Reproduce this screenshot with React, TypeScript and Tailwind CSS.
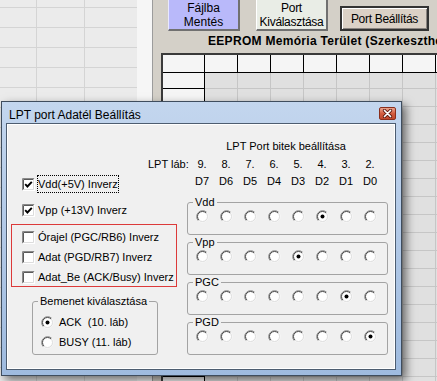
import React from 'react';

const COLS = ['9.', '8.', '7.', '6.', '5.', '4.', '3.', '2.'];
const BITS = ['D7', 'D6', 'D5', 'D4', 'D3', 'D2', 'D1', 'D0'];
const GROUPS = [
  { name: 'Vdd', checked: 5 },
  { name: 'Vpp', checked: 4 },
  { name: 'PGC', checked: 6 },
  { name: 'PGD', checked: 7 },
];
const LEFT_ROWS = Array.from({ length: 19 });
const TABLE_ROWS = Array.from({ length: 19 });
const TABLE_COLS = Array.from({ length: 8 });

function Radio({ checked }: { checked?: boolean }) {
  return (
    <svg width="13" height="13" viewBox="0 0 13 13" className="shrink-0">
      <circle cx="6.5" cy="6.5" r="5" fill="#fff" />
      <path d="M2.26 10.74A6 6 0 0 1 10.74 2.26" fill="none" stroke="#8c8c8c" />
      <path d="M10.74 2.26A6 6 0 0 1 2.26 10.74" fill="none" stroke="#f6f6f6" />
      <path d="M2.96 10.04A5 5 0 0 1 10.04 2.96" fill="none" stroke="#4a4a4a" />
      <path d="M10.04 2.96A5 5 0 0 1 2.96 10.04" fill="none" stroke="#dedede" />
      {checked && <circle cx="6.5" cy="6.5" r="2" fill="#000" />}
    </svg>
  );
}

function Check({ checked }: { checked?: boolean }) {
  return (
    <svg width="13" height="13" viewBox="0 0 13 13" className="shrink-0">
      <rect x="0" y="0" width="13" height="13" fill="#fff" />
      <path d="M0.5 12.5V0.5H12.5" stroke="#8a8a8a" fill="none" />
      <path d="M1.5 11.5V1.5H11.5" stroke="#5a5a5a" fill="none" />
      <path d="M0.5 12.5H12.5V0.5" stroke="#fff" fill="none" />
      <path d="M1.5 11.5H11.5V1.5" stroke="#dcdcdc" fill="none" />
      {checked && <path d="M3.2 6.2l2.2 2.3L9.8 3.8" stroke="#000" strokeWidth="1.9" fill="none" />}
    </svg>
  );
}

function CheckRow({ label, checked, focused }: { label: string; checked?: boolean; focused?: boolean }) {
  return (
    <div className={`flex items-center h-[20px] ${focused ? 'gap-[2px]' : 'gap-[3px]'}`}>
      <Check checked={checked} />
      <span
        className={`whitespace-nowrap leading-[16px] ${focused ? 'border border-dotted border-black' : ''}`}
      >
        {label}
      </span>
    </div>
  );
}

function BitGroup({ name, checked }: { name: string; checked: number }) {
  return (
    <fieldset className="h-[39px] border border-[#a3a3a3] rounded-[3px]">
      <legend className="ml-[5px] px-[2px] leading-[13px]">{name}</legend>
      <div className="flex pl-[2px] mt-[1px]">
        {COLS.map((c, i) => (
          <div key={c} className="w-[24px] flex justify-center">
            <Radio checked={i === checked} />
          </div>
        ))}
      </div>
    </fieldset>
  );
}

function Background() {
  return (
    <div className="flex h-full text-[11px] text-black">
      <div className="w-[137px] shrink-0 bg-[#ebebeb] flex flex-col">
        <div className="h-[8px] shrink-0 flex border-b border-[#d4d4d4]">
          <div className="w-[37px] border-r border-[#d4d4d4]" />
          <div className="w-[48px] border-r border-[#d4d4d4]" />
        </div>
        {LEFT_ROWS.map((_, i) => (
          <div key={i} className="h-[20px] shrink-0 flex border-b border-[#d4d4d4]">
            <div className="w-[37px] border-r border-[#d4d4d4]" />
            <div className="w-[48px] border-r border-[#d4d4d4]" />
          </div>
        ))}
      </div>
      <div className="w-[16px] shrink-0 bg-[#f6f6f6] border-r border-[#9c9c9c]" />
      <div className="flex-1 flex flex-col bg-[#d4d0c8] min-w-0">
        <div className="flex items-start h-[31px] shrink-0 text-[12px]">
          <div className="ml-[15px] w-[72px] h-[31px] bg-[#b9b9fa] border-l border-l-[#e8e8ff] border-r-2 border-b-2 border-r-[#707070] border-b-[#707070] flex flex-col items-center justify-center leading-[14px]">
            <span>Fájlba</span>
            <span>Mentés</span>
          </div>
          <div className="ml-[16px] w-[72px] h-[31px] bg-[#e9ede6] border-l border-l-white border-r-2 border-b-2 border-r-[#707070] border-b-[#707070] flex flex-col items-center justify-center leading-[14px] tracking-[-0.3px]">
            <span>Port</span>
            <span>Kiválasztása</span>
          </div>
          <div className="ml-[12px] mt-[6px] w-[89px] h-[25px] bg-[#dbd1c6] border-2 border-[#333] shadow-[inset_1px_1px_0_#fff,inset_-1px_-1px_0_#8a8480] flex items-center justify-center tracking-[-0.3px]">
            Port Beállítás
          </div>
        </div>
        <div className="mt-[3px] pl-[55px] text-[12px] font-bold leading-[15px] tracking-[0.3px] whitespace-nowrap">
          EEPROM Memória Terület (Szerkeszthető)
        </div>
        <div className="mt-[4px] ml-[8px] border-l-2 border-t-2 border-[#3a3a3a] flex flex-col">
          <div className="flex h-[18px] shrink-0">
            <div className="w-[42px] shrink-0 bg-[#f5f5f5] border-r border-b border-black" />
            {TABLE_COLS.map((_, i) => (
              <div key={i} className="w-[33px] shrink-0 bg-[#f5f5f5] border-r border-b border-black" />
            ))}
          </div>
          {TABLE_ROWS.map((_, r) => (
            <div key={r} className={`flex shrink-0 ${r === 0 ? 'h-[16px]' : 'h-[18px]'}`}>
              <div className="w-[42px] shrink-0 bg-[#f5f5f5] border-r border-b border-black" />
              {TABLE_COLS.map((_, i) => (
                <div key={i} className="w-[33px] shrink-0 bg-[#e0e0e0] border-r border-b border-[#c6c6c6]" />
              ))}
            </div>
          ))}
        </div>
      </div>
    </div>
  );
}

function CloseButton() {
  return (
    <div className="mt-[5px] w-[17px] h-[13px] rounded-[2px] border border-[#8a2e1c] bg-gradient-to-b from-[#eaa48e] via-[#d25d40] to-[#c0472c] flex items-center justify-center">
      <svg width="11" height="9" viewBox="0 0 11 9">
        <path d="M2.5 1.5L8.5 7.5M8.5 1.5L2.5 7.5" stroke="#5a1a10" strokeWidth="3.2" strokeLinecap="round" />
        <path d="M2.5 1.5L8.5 7.5M8.5 1.5L2.5 7.5" stroke="#fff" strokeWidth="1.7" strokeLinecap="round" />
      </svg>
    </div>
  );
}

function LptDialog() {
  return (
    <div className="absolute left-[1px] top-[101px] w-[401px] h-[275px] border border-[#3f4d5e] bg-gradient-to-b from-[#c3d6ee] to-[#9fbbdf] pl-[4px] pr-[5px] pb-[5px] flex flex-col shadow-[4px_4px_9px_rgba(0,0,0,0.55)]">
      <div className="h-[21px] shrink-0 flex items-start justify-between">
        <span className="mt-[6px] pl-[3px] text-[12px] leading-[15px] text-black">
          LPT port Adatél Beállítás
        </span>
        <CloseButton />
      </div>
      <div className="flex-1 border border-[#4d5d70] bg-[#f0f0f0] shadow-[inset_1px_1px_0_#fff,inset_-1px_-1px_0_#fff] p-[1px] flex text-[11px] text-black">
        <div className="w-[174px] shrink-0 flex flex-col">
          <div className="mt-[49px] pl-[14px]">
            <CheckRow label="Vdd(+5V) Inverz" checked focused />
          </div>
          <div className="mt-[6px] pl-[14px]">
            <CheckRow label="Vpp (+13V) Inverz" checked />
          </div>
          <div className="mt-[4px] ml-[3px] w-[166px] h-[63px] border border-[#dc3a3a] pt-[2px] pl-[10px]">
            <CheckRow label="Órajel (PGC/RB6) Inverz" />
            <CheckRow label="Adat (PGD/RB7) Inverz" />
            <CheckRow label="Adat_Be (ACK/Busy) Inverz" />
          </div>
          <fieldset className="mt-[8px] ml-[24px] w-[126px] h-[60px] border border-[#a3a3a3] rounded-[3px]">
            <legend className="ml-[5px] px-[2px] leading-[13px] whitespace-nowrap">Bemenet kiválasztása</legend>
            <div className="mt-[4px] pl-[8px]">
              <div className="flex items-center h-[20px] gap-[5px]">
                <Radio checked />
                <span className="whitespace-pre">ACK  (10. láb)</span>
              </div>
              <div className="flex items-center h-[20px] gap-[5px]">
                <Radio />
                <span className="whitespace-pre">BUSY (11. láb)</span>
              </div>
            </div>
          </fieldset>
        </div>
        <div className="flex-1 flex flex-col min-w-0">
          <div className="mt-[15px] pl-[8px] w-[200px] text-center leading-[13px] whitespace-nowrap">
            LPT Port bitek beállítása
          </div>
          <div className="mt-[5px] flex leading-[13px]">
            <span className="w-[42px] -ml-[34px] shrink-0 whitespace-nowrap">LPT láb:</span>
            {COLS.map((c) => (
              <span key={c} className="w-[24px] shrink-0 text-center">{c}</span>
            ))}
          </div>
          <div className="mt-[4px] pl-[8px] flex leading-[13px]">
            {BITS.map((b) => (
              <span key={b} className="w-[24px] shrink-0 text-center">{b}</span>
            ))}
          </div>
          <div className="mt-[8px] ml-[5px] w-[201px] flex flex-col gap-[1px]">
            {GROUPS.map((g) => (
              <BitGroup key={g.name} name={g.name} checked={g.checked} />
            ))}
          </div>
        </div>
      </div>
    </div>
  );
}

export default function App() {
  return (
    <div className="relative w-[437px] h-[381px] overflow-hidden bg-[#d4d0c8] font-['Liberation_Sans',Arial,sans-serif]">
      <Background />
      <LptDialog />
    </div>
  );
}
